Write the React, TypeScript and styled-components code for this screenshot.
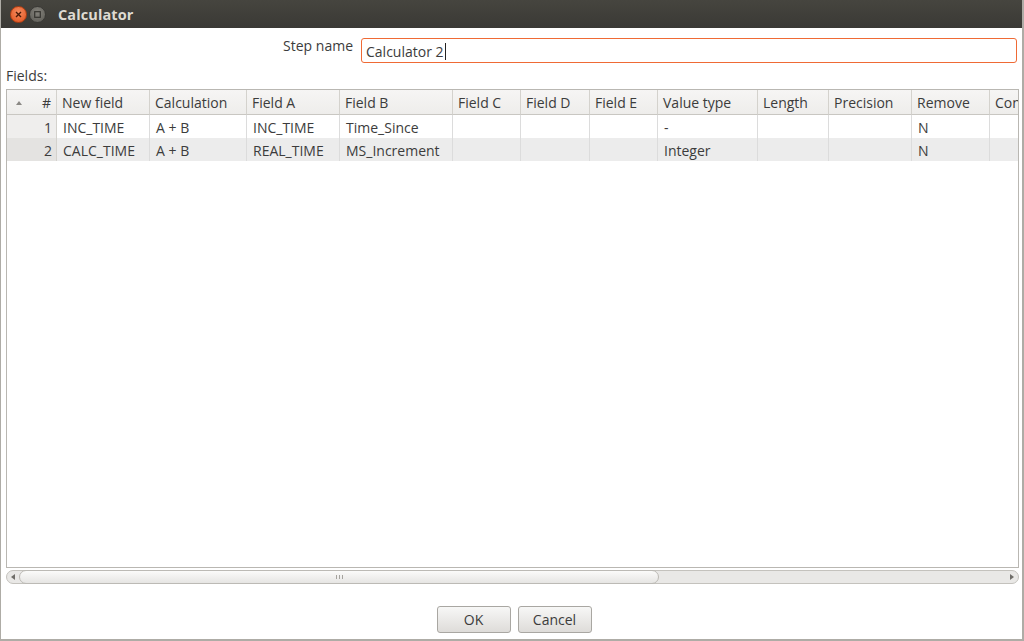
import React from "react";
import styled, { createGlobalStyle } from "styled-components";

const Global = createGlobalStyle`
  html, body { margin: 0; padding: 0; background: #ffffff; }
  body { font-family: "Open Sans", "DejaVu Sans", sans-serif; }
  * { box-sizing: border-box; }
`;

const Window = styled.div`
  width: 1024px;
  height: 641px;
  display: flex;
  flex-direction: column;
  background: #ffffff;
  border-left: 1px solid #aeaca6;
  border-right: 2px solid #aeaca6;
  border-bottom: 2px solid #aeaca6;
  overflow: hidden;
`;

const TitleBar = styled.div`
  height: 28px;
  flex: none;
  display: flex;
  align-items: center;
  padding-left: 10px;
  background: linear-gradient(#46453f, #3a3935);
  margin: 0 -2px 0 -1px;
`;

const WinBtn = styled.div<{ $close?: boolean }>`
  width: 17px;
  height: 17px;
  border-radius: 50%;
  margin-right: 2px;
  display: flex;
  align-items: center;
  justify-content: center;
  background: ${(p) =>
    p.$close
      ? "radial-gradient(circle at 50% 35%, #f58b5f, #e0511c)"
      : "radial-gradient(circle at 50% 35%, #84827b, #5b5a54)"};
  border: 1px solid ${(p) => (p.$close ? "#b03e12" : "#3a3935")};
`;

const Title = styled.div`
  margin-left: 10px;
  color: #dfdbd2;
  font-weight: bold;
  font-size: 14.5px;
  letter-spacing: 0.1px;
`;

const Body = styled.div`
  flex: 1;
  display: flex;
  flex-direction: column;
  padding: 10px 4px 0 5px;
`;

const StepRow = styled.div`
  display: grid;
  grid-template-columns: 347px 1fr;
  column-gap: 8px;
  align-items: start;
`;

const StepLabel = styled.label`
  text-align: right;
  font-size: 14px;
  color: #3c3c3c;
  margin-top: -2px;
`;

const StepInput = styled.div`
  height: 25px;
  border: 1.5px solid #ef6a35;
  border-radius: 3px;
  padding: 1px 4px 0;
  font-size: 14px;
  color: #3c3c3c;
  display: flex;
  align-items: center;
  margin-right: 1px;
`;

const Caret = styled.span`
  display: inline-block;
  width: 1px;
  height: 17px;
  background: #222;
  margin-left: 1px;
`;

const FieldsLabel = styled.div`
  font-size: 14px;
  color: #3c3c3c;
  margin-top: 3px;
  height: 23px;
`;

const TableFrame = styled.div`
  height: 479px;
  border: 1px solid #b9b7b2;
  background: #fff;
  overflow: hidden;
  width: 1013px;
`;

const Grid = styled.div`
  display: grid;
  grid-template-columns: 50px 93px 97px 93px 113px 68px 69px 68px 100px 71px 83px 78px 60px;
  width: 1043px;
`;

const HeadCell = styled.div<{ $align?: string }>`
  height: 25px;
  background: linear-gradient(#f6f5f4, #eeedeb);
  border-bottom: 1px solid #c9c7c2;
  border-right: 1px solid #d4d2cd;
  font-size: 14px;
  color: #3c3c3c;
  display: flex;
  align-items: center;
  justify-content: ${(p) => p.$align || "flex-start"};
  padding: 1px 5px 0;
  white-space: nowrap;
  overflow: hidden;
`;

const SortArrow = styled.span`
  width: 0;
  height: 0;
  border-left: 3px solid transparent;
  border-right: 3px solid transparent;
  border-bottom: 4px solid #8a8884;
  margin-right: auto;
  margin-left: 4px;
`;

const RowHead = styled.div<{ $alt?: boolean }>`
  height: 23px;
  background: ${(p) => (p.$alt ? "#e4e3e1" : "#efeeed")};
  border-right: 1px solid #d4d2cd;
  font-size: 14px;
  color: #3c3c3c;
  display: flex;
  align-items: center;
  justify-content: flex-end;
  padding: 1px 4px 0 0;
`;

const Cell = styled.div<{ $alt?: boolean }>`
  height: 23px;
  background: ${(p) => (p.$alt ? "#ececec" : "#ffffff")};
  border-right: 1px solid #dcdcdc;
  font-size: 14px;
  color: #3c3c3c;
  display: flex;
  align-items: center;
  padding: 1px 6px 0;
  white-space: nowrap;
  overflow: hidden;
`;

const ScrollBar = styled.div`
  height: 14px;
  width: 1013px;
  margin-top: 2px;
  background: #e9e8e6;
  border-radius: 7px;
  border: 1px solid #c4c2bd;
  display: flex;
  align-items: center;
  position: relative;
`;

const ScrollArrow = styled.div<{ $right?: boolean }>`
  width: 12px;
  height: 12px;
  display: flex;
  align-items: center;
  justify-content: center;
  flex: none;
  ${(p) => (p.$right ? "margin-left: auto;" : "")}
`;

const Tri = styled.span<{ $right?: boolean }>`
  width: 0;
  height: 0;
  border-top: 3px solid transparent;
  border-bottom: 3px solid transparent;
  ${(p) =>
    p.$right ? "border-left: 4px solid #6f6d69;" : "border-right: 4px solid #6f6d69;"}
`;

const Thumb = styled.div`
  position: absolute;
  left: 12px;
  top: -1px;
  width: 640px;
  height: 14px;
  border-radius: 7px;
  border: 1px solid #bcbab5;
  background: linear-gradient(#fbfbfa, #e6e5e3);
  display: flex;
  align-items: center;
  justify-content: center;
`;

const Grip = styled.span`
  width: 7px;
  height: 4px;
  background: repeating-linear-gradient(90deg, #a5a39e 0 1px, transparent 1px 3px);
`;

const ButtonRow = styled.div`
  margin-top: 22px;
  display: flex;
  justify-content: center;
  gap: 7px;
  padding-left: 4px;
`;

const Button = styled.button`
  width: 74px;
  height: 27px;
  border: 1px solid #a9a7a2;
  border-radius: 3px;
  background: linear-gradient(#f7f7f6, #dedcd9);
  font-family: "Open Sans", "DejaVu Sans", sans-serif;
  font-size: 14px;
  color: #3c3c3c;
  padding: 0;
`;

const headers = [
  "New field",
  "Calculation",
  "Field A",
  "Field B",
  "Field C",
  "Field D",
  "Field E",
  "Value type",
  "Length",
  "Precision",
  "Remove",
  "Conversion mask",
];

const rows = [
  ["INC_TIME", "A + B", "INC_TIME", "Time_Since", "", "", "", "-", "", "", "N", ""],
  ["CALC_TIME", "A + B", "REAL_TIME", "MS_Increment", "", "", "", "Integer", "", "", "N", ""],
];

export default function App() {
  return (
    <>
      <Global />
      <Window>
        <TitleBar>
          <WinBtn $close>
            <svg width="7" height="7" viewBox="0 0 7 7">
              <path d="M1 1L6 6M6 1L1 6" stroke="#4a1a08" strokeWidth="1.4" />
            </svg>
          </WinBtn>
          <WinBtn>
            <svg width="7" height="7" viewBox="0 0 7 7">
              <rect x="0.7" y="0.7" width="5.6" height="5.6" fill="none" stroke="#35342f" strokeWidth="1.2" />
            </svg>
          </WinBtn>
          <Title>Calculator</Title>
        </TitleBar>
        <Body>
          <StepRow>
            <StepLabel>Step name</StepLabel>
            <StepInput>
              Calculator 2<Caret />
            </StepInput>
          </StepRow>
          <FieldsLabel>Fields:</FieldsLabel>
          <TableFrame>
            <Grid>
              <HeadCell $align="flex-end">
                <SortArrow />#
              </HeadCell>
              {headers.map((h) => (
                <HeadCell key={h}>{h}</HeadCell>
              ))}
              {rows.map((r, i) => (
                <React.Fragment key={i}>
                  <RowHead $alt={i === 1}>{i + 1}</RowHead>
                  {r.map((c, j) => (
                    <Cell key={j} $alt={i === 1}>
                      {c}
                    </Cell>
                  ))}
                </React.Fragment>
              ))}
            </Grid>
          </TableFrame>
          <ScrollBar>
            <ScrollArrow>
              <Tri />
            </ScrollArrow>
            <Thumb>
              <Grip />
            </Thumb>
            <ScrollArrow $right>
              <Tri $right />
            </ScrollArrow>
          </ScrollBar>
          <ButtonRow>
            <Button>OK</Button>
            <Button>Cancel</Button>
          </ButtonRow>
        </Body>
      </Window>
    </>
  );
}
